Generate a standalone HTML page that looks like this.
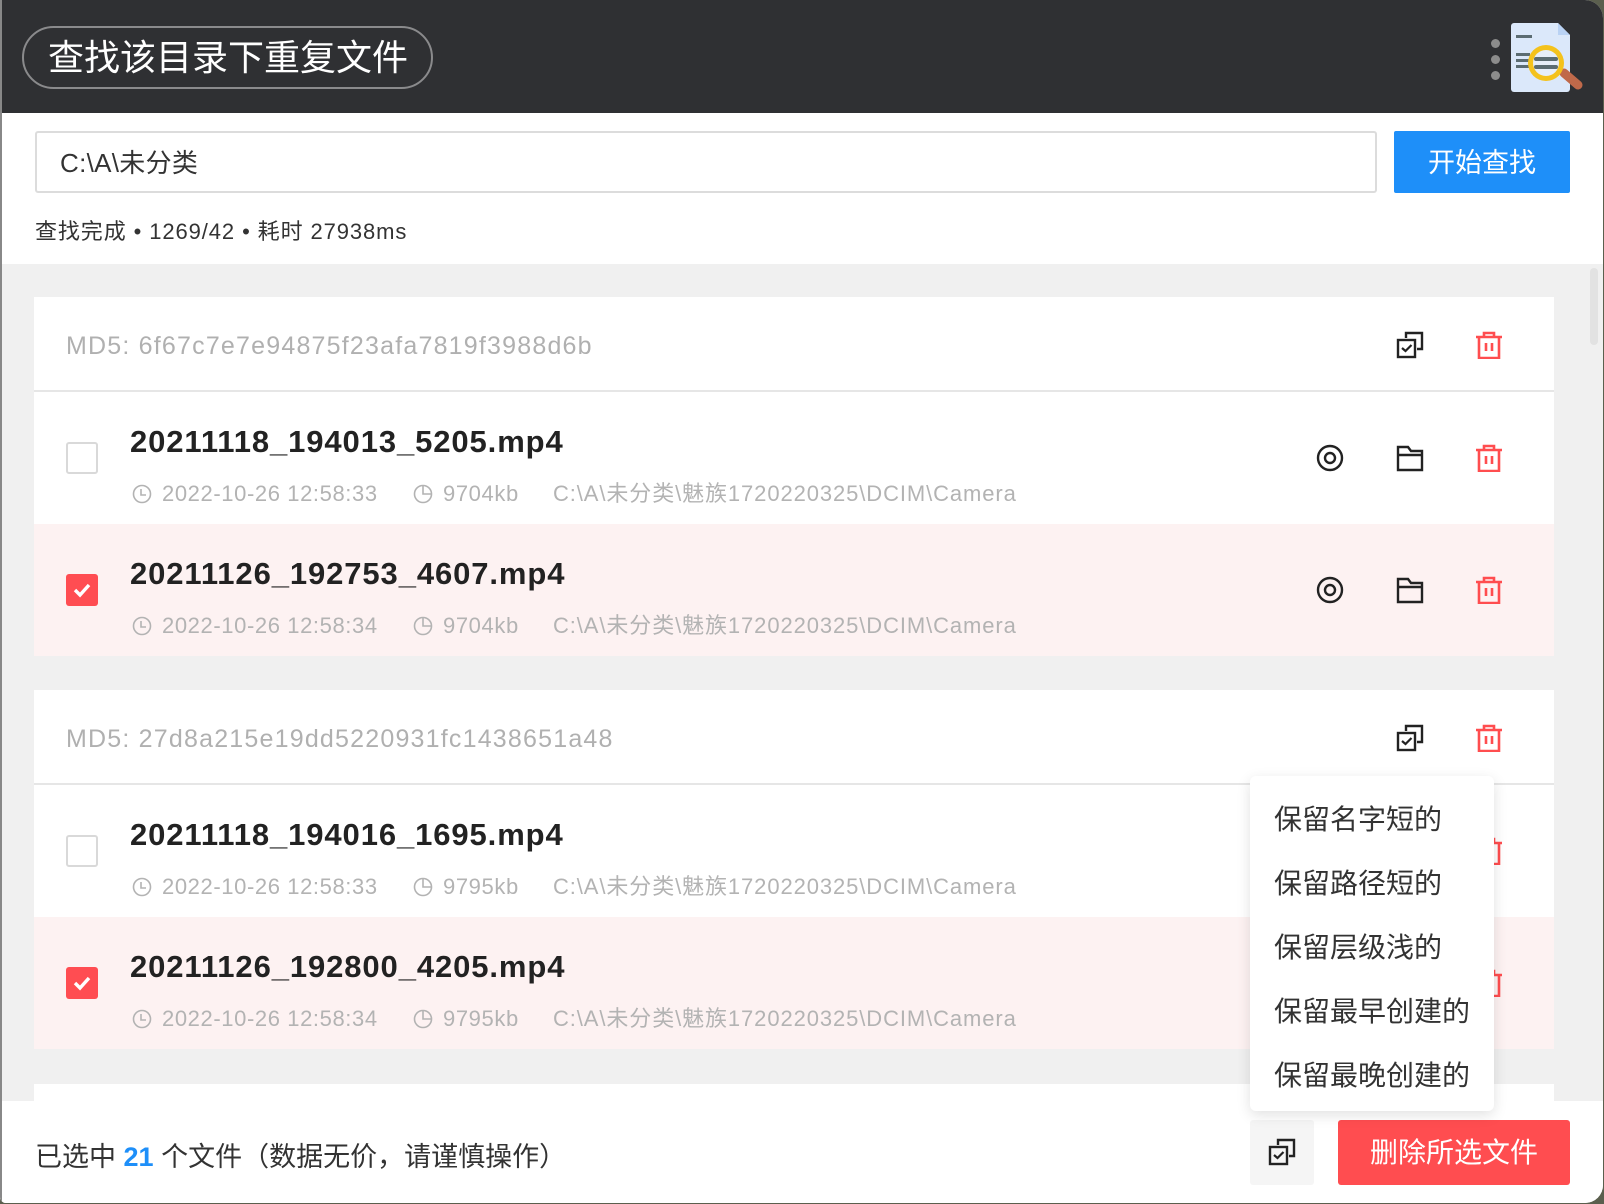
<!DOCTYPE html>
<html><head><meta charset="utf-8">
<style>
*{margin:0;padding:0;box-sizing:border-box}
body{width:1604px;height:1204px;background:#5b5f4e;position:relative;overflow:hidden;font-family:"Liberation Sans","Noto Sans CJK SC",sans-serif}
.win{position:absolute;left:0;top:0;width:1603px;height:1203px;background:#fff;border-radius:0 18px 18px 6px;overflow:hidden}
.lb{position:absolute;left:0;top:0;width:2px;height:100%;background:#888;z-index:5}
.abs{position:absolute}
.hdr{left:0;top:0;width:100%;height:113px;background:#2f3033}
.pill{left:22px;top:26px;width:411px;height:63px;border:2px solid #8a8a8c;border-radius:32px;color:#fff;font-size:36px;line-height:59px;padding-left:24px;white-space:nowrap}
.dot{width:9px;height:9px;border-radius:50%;background:#8c8c8c;left:1491px}
.inp{left:35px;top:131px;width:1342px;height:62px;border:2px solid #dcdcdc;border-radius:3px;font-size:26px;line-height:60px;padding-left:23px;color:#333;letter-spacing:0.3px}
.btn{left:1394px;top:131px;width:176px;height:62px;background:#1e8ff9;color:#fff;font-size:27px;line-height:64px;text-align:center;border-radius:2px}
.status{left:35px;top:214px;font-size:22px;color:#333;letter-spacing:0.9px}
.gray{left:0;top:264px;width:100%;height:840px;background:#f0f0f0}
.sb{left:1590px;top:268px;width:8px;height:77px;background:#e2e2e2;border-radius:4px}
.card{left:34px;width:1520px;background:#fff}
.ch{height:95px;border-bottom:2px solid #e6e6e6;position:relative}
.md5{position:absolute;left:32px;top:2px;line-height:95px;font-size:25px;color:#b0b0b0;letter-spacing:1.2px}
.row{height:132px;position:relative}
.row.sel{background:#fdf2f2}
.cb{position:absolute;left:32px;top:50px;width:32px;height:32px;border:2px solid #d9d9d9;border-radius:3px;background:#fff}
.row.sel .cb{border:none;background:#ff4d52}
.fn{position:absolute;left:96px;top:32px;font-size:31px;font-weight:bold;color:#222;white-space:nowrap;letter-spacing:0.9px}
.m{position:absolute;top:89px;font-size:22px;color:#b3b3b3;white-space:nowrap;line-height:26px}
.ic{position:absolute;width:28px;height:28px}
.ftr{left:0;top:1101px;width:100%;height:103px;background:#fff}
.ftxt{left:35px;top:1135px;font-size:27px;color:#333;white-space:nowrap}
.cpb{left:1250px;top:1120px;width:64px;height:65px;background:#f5f5f5;border-radius:3px}
.del{left:1338px;top:1120px;width:232px;height:65px;background:#ff4d50;color:#fff;font-size:28px;line-height:65px;text-align:center;border-radius:3px}
.dd{left:1250px;top:776px;width:244px;height:335px;background:#fff;border-radius:6px;box-shadow:0 4px 14px rgba(0,0,0,.12)}
.dd div{position:absolute;left:24px;font-size:28px;color:#333;white-space:nowrap}
</style></head><body>
<svg width="0" height="0" style="position:absolute">
<defs>
<symbol id="cp" viewBox="0 0 28 28"><path d="M10 7V2h16v16h-5" fill="none" stroke="#222" stroke-width="2.4"/><rect x="2" y="9" width="17" height="17" fill="none" stroke="#222" stroke-width="2.4"/><path d="M6 17l3.5 3 6-6" fill="none" stroke="#222" stroke-width="2.2"/></symbol>
<symbol id="tr" viewBox="0 0 28 28"><path d="M1 6h26M9 6V2h10v4M4 6v21h20V6M11 12v8M17 12v8" fill="none" stroke="#ff4d4f" stroke-width="2.6"/></symbol>
<symbol id="ey" viewBox="0 0 28 28"><circle cx="14" cy="14" r="12" fill="none" stroke="#222" stroke-width="2.4"/><circle cx="14" cy="14" r="5" fill="none" stroke="#222" stroke-width="2.4"/></symbol>
<symbol id="fd" viewBox="0 0 28 28"><path d="M2 3h10l3 4h11v19H2zM2 11h24" fill="none" stroke="#222" stroke-width="2.4"/></symbol>
<symbol id="ck" viewBox="0 0 20 20"><circle cx="10" cy="10" r="8.5" fill="none" stroke="#b3b3b3" stroke-width="1.6"/><path d="M9 5v6h5" fill="none" stroke="#b3b3b3" stroke-width="1.6"/></symbol>
<symbol id="pi" viewBox="0 0 20 20"><circle cx="10" cy="10" r="8.5" fill="none" stroke="#b3b3b3" stroke-width="1.6"/><path d="M10 1.5V10h8.5" fill="none" stroke="#b3b3b3" stroke-width="1.6"/></symbol>
<symbol id="tk" viewBox="0 0 32 32"><path d="M9 16l5 5 9-10" fill="none" stroke="#fff" stroke-width="3.4"/></symbol>
</defs></svg>
<div class="win">
<div class="lb"></div>
<div class="abs hdr"></div>
<div class="abs pill">查找该目录下重复文件</div>
<div class="abs dot" style="top:39px"></div><div class="abs dot" style="top:55px"></div><div class="abs dot" style="top:71px"></div>
<svg class="abs" style="left:1510px;top:21px" width="74" height="74" viewBox="0 0 74 74">
<path d="M4 2h44l12 12v54a3 3 0 0 1-3 3H4a3 3 0 0 1-3-3V5a3 3 0 0 1 3-3z" fill="#dbe8fa"/>
<path d="M48 2l12 12H48z" fill="#b9d2f4"/>
<rect x="6" y="14" width="16" height="3" fill="#5b6c72"/>
<rect x="6" y="32" width="14" height="3" fill="#5b6c72"/><rect x="6" y="38" width="14" height="3" fill="#5b6c72"/><rect x="6" y="44" width="14" height="3" fill="#5b6c72"/>
<path d="M54 52l14 12" stroke="#c0694a" stroke-width="9" stroke-linecap="round"/>
<circle cx="36" cy="42" r="18" fill="#f4c21c"/><circle cx="36" cy="42" r="13" fill="#e6eef9"/>
<rect x="24" y="36" width="24" height="4" rx="2" fill="#5b6c72"/><rect x="24" y="44" width="24" height="4" rx="2" fill="#5b6c72"/>
</svg>
<div class="abs inp">C:\A\未分类</div>
<div class="abs btn">开始查找</div>
<div class="abs status">查找完成 • 1269/42 • 耗时 27938ms</div>
<div class="abs gray"></div>
<div class="abs sb"></div>

<div class="abs card" style="top:297px">
 <div class="ch"><div class="md5">MD5: 6f67c7e7e94875f23afa7819f3988d6b</div>
  <svg class="ic" style="left:1362px;top:34px"><use href="#cp"/></svg><svg class="ic" style="left:1441px;top:34px"><use href="#tr"/></svg></div>
 <div class="row"><div class="cb"></div><div class="fn">20211118_194013_5205.mp4</div>
  <svg class="abs" style="left:98px;top:92px" width="20" height="20"><use href="#ck"/></svg><div class="m" style="left:128px;letter-spacing:0.6px">2022-10-26 12:58:33</div>
  <svg class="abs" style="left:379px;top:92px" width="20" height="20"><use href="#pi"/></svg><div class="m" style="left:409px;letter-spacing:0.6px">9704kb</div>
  <div class="m" style="left:519px;letter-spacing:0.9px">C:\A\未分类\魅族1720220325\DCIM\Camera</div>
  <svg class="ic" style="left:1282px;top:52px"><use href="#ey"/></svg><svg class="ic" style="left:1362px;top:52px"><use href="#fd"/></svg><svg class="ic" style="left:1441px;top:52px"><use href="#tr"/></svg></div>
 <div class="row sel"><div class="cb"><svg width="32" height="32"><use href="#tk"/></svg></div><div class="fn">20211126_192753_4607.mp4</div>
  <svg class="abs" style="left:98px;top:92px" width="20" height="20"><use href="#ck"/></svg><div class="m" style="left:128px;letter-spacing:0.6px">2022-10-26 12:58:34</div>
  <svg class="abs" style="left:379px;top:92px" width="20" height="20"><use href="#pi"/></svg><div class="m" style="left:409px;letter-spacing:0.6px">9704kb</div>
  <div class="m" style="left:519px;letter-spacing:0.9px">C:\A\未分类\魅族1720220325\DCIM\Camera</div>
  <svg class="ic" style="left:1282px;top:52px"><use href="#ey"/></svg><svg class="ic" style="left:1362px;top:52px"><use href="#fd"/></svg><svg class="ic" style="left:1441px;top:52px"><use href="#tr"/></svg></div>
</div>

<div class="abs card" style="top:690px">
 <div class="ch"><div class="md5">MD5: 27d8a215e19dd5220931fc1438651a48</div>
  <svg class="ic" style="left:1362px;top:34px"><use href="#cp"/></svg><svg class="ic" style="left:1441px;top:34px"><use href="#tr"/></svg></div>
 <div class="row"><div class="cb"></div><div class="fn">20211118_194016_1695.mp4</div>
  <svg class="abs" style="left:98px;top:92px" width="20" height="20"><use href="#ck"/></svg><div class="m" style="left:128px;letter-spacing:0.6px">2022-10-26 12:58:33</div>
  <svg class="abs" style="left:379px;top:92px" width="20" height="20"><use href="#pi"/></svg><div class="m" style="left:409px;letter-spacing:0.6px">9795kb</div>
  <div class="m" style="left:519px;letter-spacing:0.9px">C:\A\未分类\魅族1720220325\DCIM\Camera</div>
  <svg class="ic" style="left:1441px;top:52px"><use href="#tr"/></svg></div>
 <div class="row sel"><div class="cb"><svg width="32" height="32"><use href="#tk"/></svg></div><div class="fn">20211126_192800_4205.mp4</div>
  <svg class="abs" style="left:98px;top:92px" width="20" height="20"><use href="#ck"/></svg><div class="m" style="left:128px;letter-spacing:0.6px">2022-10-26 12:58:34</div>
  <svg class="abs" style="left:379px;top:92px" width="20" height="20"><use href="#pi"/></svg><div class="m" style="left:409px;letter-spacing:0.6px">9795kb</div>
  <div class="m" style="left:519px;letter-spacing:0.9px">C:\A\未分类\魅族1720220325\DCIM\Camera</div>
  <svg class="ic" style="left:1441px;top:52px"><use href="#tr"/></svg></div>
</div>
<div class="abs card" style="top:1084px;height:30px"></div>

<div class="abs ftr"></div>
<div class="abs ftxt">已选中 <b style="color:#1e8ff9">21</b> 个文件（数据无价，请谨慎操作）</div>
<div class="abs cpb"><svg class="ic" style="left:18px;top:18px"><use href="#cp"/></svg></div>
<div class="abs del">删除所选文件</div>
<div class="abs dd">
 <div style="top:22px">保留名字短的</div>
 <div style="top:86px">保留路径短的</div>
 <div style="top:150px">保留层级浅的</div>
 <div style="top:214px">保留最早创建的</div>
 <div style="top:278px">保留最晚创建的</div>
</div>
</div>
</body></html>
